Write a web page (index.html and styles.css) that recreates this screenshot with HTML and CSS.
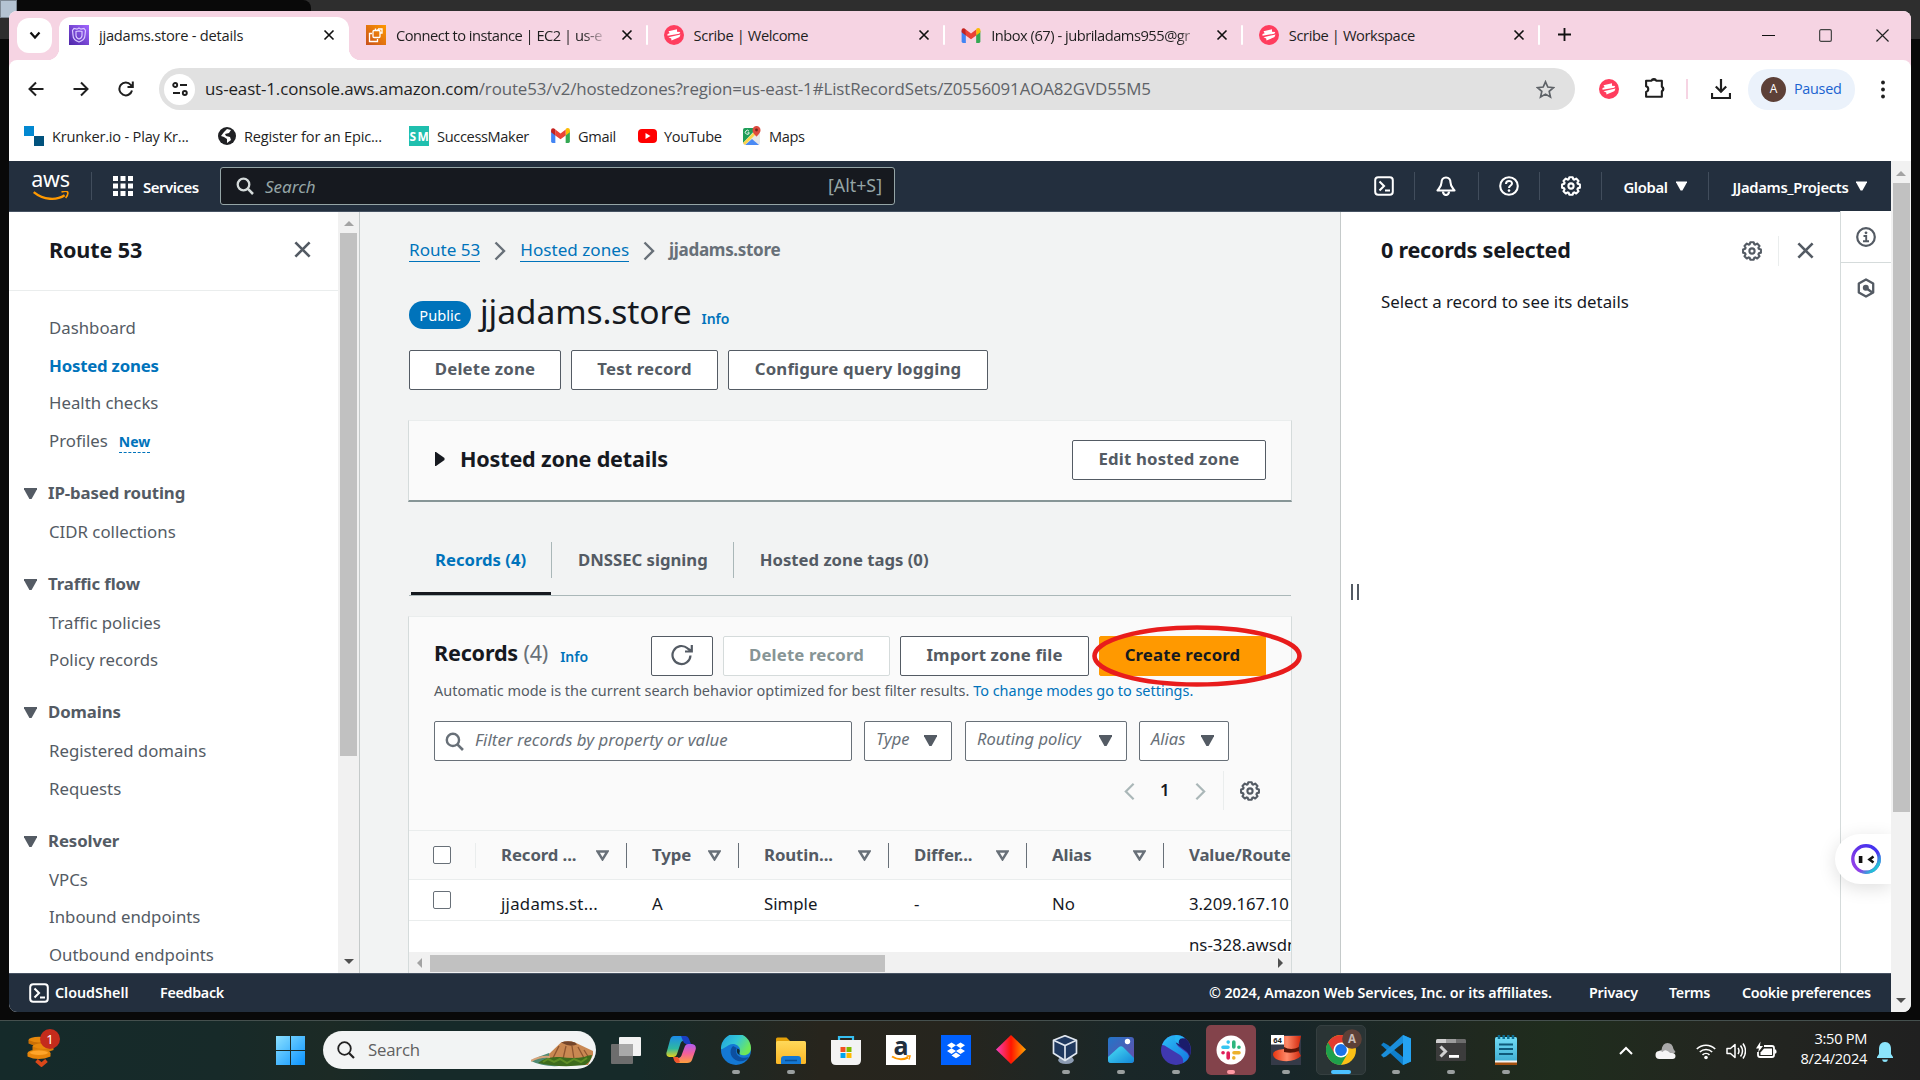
FILE: index.html
```html
<!DOCTYPE html>
<html lang="en">
<head>
<meta charset="utf-8">
<title>jjadams.store - details</title>
<link rel="stylesheet" href="styles.css">
</head>
<body>
<svg class="defs" aria-hidden="true">
  <defs>
    <linearGradient id="purple" x1="0" y1="1" x2="1" y2="0"><stop offset="0" stop-color="#4d27a8"/><stop offset="1" stop-color="#a166ff"/></linearGradient>
    <linearGradient id="orange" x1="0" y1="1" x2="1" y2="0"><stop offset="0" stop-color="#c8511b"/><stop offset="1" stop-color="#f90"/></linearGradient>
    <linearGradient id="ring" x1="1" y1="0" x2="0" y2="1"><stop offset="0" stop-color="#3a35f5"/><stop offset=".4" stop-color="#5b32e8"/><stop offset="1" stop-color="#a044e8"/></linearGradient>
    <linearGradient id="ring2" x1="0" y1="0" x2="1" y2="1"><stop offset=".6" stop-color="#22c3d6" stop-opacity="0"/><stop offset=".85" stop-color="#22c3d6"/></linearGradient>
    <linearGradient id="win" x1="0" y1="0" x2="1" y2="1"><stop offset="0" stop-color="#8be0ff"/><stop offset="1" stop-color="#0a93ff"/></linearGradient>
    <linearGradient id="edgeTop" x1="0" y1="0" x2="1" y2=".5"><stop offset="0" stop-color="#1f9de0"/><stop offset=".55" stop-color="#34c8d6"/><stop offset="1" stop-color="#6fe858"/></linearGradient>
    <linearGradient id="folder" x1="0" y1="0" x2="0" y2="1"><stop offset="0" stop-color="#ffd95a"/><stop offset="1" stop-color="#fbb624"/></linearGradient>
    <linearGradient id="cop1" x1="0" y1="0" x2="0" y2="1"><stop offset="0" stop-color="#1c8bea"/><stop offset=".6" stop-color="#2fb8a0"/><stop offset="1" stop-color="#e8d21a"/></linearGradient>
    <linearGradient id="cop2" x1="0" y1="0" x2="0" y2="1"><stop offset="0" stop-color="#b05cf0"/><stop offset=".5" stop-color="#f4609a"/><stop offset="1" stop-color="#fda03c"/></linearGradient>
    <linearGradient id="diamond"><stop offset="0" stop-color="#f43fc0"/><stop offset=".5" stop-color="#ff1500"/><stop offset="1" stop-color="#ffa800"/></linearGradient>
    <linearGradient id="photo" x1="0" y1="0" x2="1" y2="1"><stop offset="0" stop-color="#2276c9"/><stop offset="1" stop-color="#6a4ba8"/></linearGradient>
    <linearGradient id="hill" x1="0" y1="0" x2="1" y2="1"><stop offset="0" stop-color="#4be0f5"/><stop offset="1" stop-color="#1286d8"/></linearGradient>
    <linearGradient id="note" x1="0" y1="0" x2="0" y2="1"><stop offset="0" stop-color="#72dcf5"/><stop offset="1" stop-color="#39a9cf"/></linearGradient>
    <linearGradient id="hat" x1="0" y1="0" x2="1" y2="0"><stop offset="0" stop-color="#e8350f"/><stop offset=".5" stop-color="#ff8a6a"/><stop offset="1" stop-color="#d2260a"/></linearGradient>
    <linearGradient id="swoosh" x1="0" y1="0" x2="1" y2="1"><stop offset="0" stop-color="#2cc0f5"/><stop offset="1" stop-color="#1478e0"/></linearGradient>
  </defs>
  <symbol id="i-x" viewBox="0 0 16 16"><path d="M2 2l12 12M14 2L2 14" fill="none" stroke="currentColor" stroke-width="2.200"/></symbol>
  <symbol id="i-gear" viewBox="0 0 20 20"><g fill="none" stroke="currentColor" stroke-width="2.100"><path d="M8.3 1.2h3.4l.6 2.1 1 .4 1.900-1.100 2.300 2.300-1.100 1.900.4 1 2.100.6v3.300l-2.100.6-.4 1 1.100 1.900-2.300 2.300-1.900-1.100-1 .4-.6 2h-3.400l-.6-2-1-.4-1.900 1.100-2.300-2.300 1.100-1.900-.4-1-2.100-.6v-3.300l2.100-.6.4-1-1.100-1.900 2.300-2.300 1.900 1.100 1-.4z" stroke-linejoin="round"/><circle cx="10" cy="10" r="2.600"/></g></symbol>
  <symbol id="i-search" viewBox="0 0 18 18"><circle cx="7.500" cy="7.500" r="5.800" fill="none" stroke="currentColor" stroke-width="2.300"/><path d="M11.700 11.700l5.300 5.300" stroke="currentColor" stroke-width="2.500"/></symbol>
  <symbol id="i-shell" viewBox="0 0 20 20"><rect x="1.200" y="1.200" width="17.600" height="17.600" rx="3" fill="none" stroke="currentColor" stroke-width="2"/><path d="M5.500 5.500L10 10l-4.500 4.500M11 14.500h5" fill="none" stroke="currentColor" stroke-width="2.100"/></symbol>
  <symbol id="i-down" viewBox="0 0 12 10"><path d="M0 0h12v1L7 10H5L0 1z" fill="currentColor"/></symbol>
  <symbol id="i-filter" viewBox="0 0 12 10"><path d="M1.500 1.300h9L6 8.600z" fill="none" stroke="currentColor" stroke-width="2.200"/></symbol>
  <symbol id="i-chev" viewBox="0 0 12 20"><path d="M1.500 1.500L10 10l-8.500 8.500" fill="none" stroke="currentColor" stroke-width="2.400"/></symbol>
  <symbol id="i-scribe" viewBox="0 0 20 20"><circle cx="10" cy="10" r="10" fill="#ff3d5e"/><path d="M4.500 6.300L13 4.300v2.400l3.300.2-1 1.800L3.500 10.700V9l2.200-.8z" fill="#fff"/><path d="M4.500 12.200L16.500 9.500l-1 2.500-1.500.7L7.500 15.500l-.3-2z" fill="#fff"/></symbol>
  <symbol id="i-gmail" viewBox="0 0 20 16"><path d="M0 3v11.500Q0 16 1.500 16H4.500V6.500z" fill="#4285f4"/><path d="M20 3v11.500q0 1.500-1.500 1.500H15.500V6.500z" fill="#34a853"/><path d="M15.500 2.500V8L20 4.500V2.500C20 0 17.300-.6 15.500 1z" fill="#fbbc04"/><path d="M4.500 8V1.500L10 5.800l5.500-4.300V8L10 12z" fill="#ea4335"/><path d="M0 2.500V4.500L4.500 8V1.500C2.500-.6 0 0 0 2.500z" fill="#c5221f"/></symbol>
</svg>

<div class="desktop">
  <div class="behind"><i class="blue-chip"></i><i class="dark-tab"></i></div>
  <div class="window">
    <div class="tabstrip">
      <button class="tab-search"><svg width="12" height="9" viewBox="0 0 12 9"><path d="M1.500 1.500L6 6.500l4.500-5" fill="none" stroke="#111" stroke-width="2.200"/></svg></button>
      <div class="tab active">
        <svg class="fav" viewBox="0 0 20 20"><rect width="20" height="20" fill="url(#purple)"/><path d="M10 3l2 1.200 3-.7 1.500 2-.5 4.500c0 4-3 6-6 7-3-1-6-3-6-7L3.500 5.500l1.500-2 3 .7z M10 6l3 .5v4c0 2-1.500 3-3 3.500-1.500-.5-3-1.500-3-3.500v-4z" fill="none" stroke="#d9c7ff" stroke-width="1.200"/></svg>
        <span class="tab-title">jjadams.store - details</span><svg class="tab-x"><use href="#i-x"/></svg>
      </div>
      <div class="tab">
        <svg class="fav" viewBox="0 0 20 20"><rect width="20" height="20" fill="url(#orange)"/><g fill="none" stroke="#fff" stroke-width="1.300"><rect x="7" y="5.500" width="7" height="7" rx="1"/><path d="M9.500 5.500v-2M12 5.500V4M14 8h2V4h-4M6 8.500H3.500v8h8V14"/></g></svg>
        <span class="tab-title fade">Connect to instance | EC2 | us-e</span><svg class="tab-x"><use href="#i-x"/></svg>
      </div>
      <div class="tab"><svg class="fav"><use href="#i-scribe"/></svg><span class="tab-title">Scribe | Welcome</span><svg class="tab-x"><use href="#i-x"/></svg></div>
      <div class="tab"><svg class="fav mail"><use href="#i-gmail"/></svg><span class="tab-title fade">Inbox (67) - jubriladams955@gr</span><svg class="tab-x"><use href="#i-x"/></svg></div>
      <div class="tab"><svg class="fav"><use href="#i-scribe"/></svg><span class="tab-title">Scribe | Workspace</span><svg class="tab-x"><use href="#i-x"/></svg></div>
      <svg class="plus" viewBox="0 0 14 14"><path d="M7 0v14M0 7h14" stroke="#111" stroke-width="2"/></svg>
      <div class="win-ctl">
        <svg viewBox="0 0 14 14"><path d="M0 7h14" stroke="#111" stroke-width="1.300"/></svg>
        <svg viewBox="0 0 14 14"><rect x=".7" y=".7" width="12.600" height="12.600" rx="1.500" fill="none" stroke="#444" stroke-width="1.300"/></svg>
        <svg viewBox="0 0 14 14"><path d="M.5.500l13 13M13.500.500l-13 13" stroke="#222" stroke-width="1.300"/></svg>
      </div>
    </div>

    <div class="toolbar">
      <svg class="nav-ic" viewBox="0 0 16 16"><path d="M15.500 8H1.500M8 1.500L1.500 8 8 14.500" fill="none" stroke="#1f1f1f" stroke-width="2"/></svg>
      <svg class="nav-ic" viewBox="0 0 16 16"><path d="M.5 8h14M8 1.500L14.500 8 8 14.500" fill="none" stroke="#1f1f1f" stroke-width="2"/></svg>
      <svg class="nav-ic" viewBox="0 0 16 16"><path d="M14 9.500A6.400 6.400 0 1 1 12.800 4L15 6M14.800.500V6H9.500" fill="none" stroke="#1f1f1f" stroke-width="2"/></svg>
      <div class="omnibox">
        <span class="site"><svg width="16" height="14" viewBox="0 0 16 14"><g fill="none" stroke="#1f1f1f" stroke-width="1.900"><circle cx="3.200" cy="3" r="2"/><path d="M8 3h7M1 11h7"/><circle cx="12.800" cy="11" r="2"/></g></svg></span>
        <span class="url"><b>us-east-1.console.aws.amazon.com</b>/route53/v2/hostedzones?region=us-east-1#ListRecordSets/Z0556091AOA82GVD55M5</span>
        <svg class="star" viewBox="0 0 18 18"><path d="M9 1.700l2.200 5 5.400.5-4.100 3.600 1.200 5.400L9 13.400l-4.700 2.800 1.200-5.400L1.400 7.200l5.400-.5z" fill="none" stroke="#5f6368" stroke-width="1.600"/></svg>
      </div>
      <svg class="t-scribe"><use href="#i-scribe"/></svg>
      <svg class="t-puzzle" viewBox="0 0 20 20"><path d="M2 3.500h5.200a2.300 2.300 0 0 1 4.400 0H17v5.700a2.300 2.300 0 0 1 0 4.300V18.800H2v-4.600a2.800 2.800 0 0 0 0-5.400z" fill="none" stroke="#1f1f1f" stroke-width="2" stroke-linejoin="round"/><path d="M7.500 3.500a2 2 0 0 1 4 0zM17 9.500a2 2 0 0 1 0 4z" fill="#1f1f1f"/></svg>
      <i class="pink-sep"></i>
      <svg class="t-dl" viewBox="0 0 20 20"><path d="M10 0v12M4.800 7.500L10 12.800l5.200-5.300M1 14v5h18v-5" fill="none" stroke="#1f1f1f" stroke-width="2.200"/></svg>
      <div class="profile"><span class="avatar">A</span><span>Paused</span></div>
      <svg class="dots" viewBox="0 0 4 18"><circle cx="2" cy="2" r="1.900"/><circle cx="2" cy="9" r="1.900"/><circle cx="2" cy="16" r="1.900"/></svg>
    </div>

    <div class="bookmarks">
      <span class="bm bm1"><svg viewBox="0 0 20 20"><path d="M0 0h10v10H0z" fill="#0288d1"/><path d="M10 10h10v10H10z" fill="#01527d"/></svg>Krunker.io - Play Kr...</span>
      <span class="bm bm2"><svg viewBox="0 0 20 20"><circle cx="10" cy="10" r="9" fill="#202124"/><path d="M10 3l4 1-2 3-4 1 1 2 4 1 1 3-4 3v-4l-3-2-3-1 3-4z" fill="#fff"/></svg>Register for an Epic...</span>
      <span class="bm bm3"><svg viewBox="0 0 20 20"><rect width="20" height="20" fill="#1fbfae"/><text x="10" y="14.500" font-size="12" font-weight="700" textLength="19" text-anchor="middle" fill="#fff" font-family="Noto Sans">SM</text></svg>SuccessMaker</span>
      <span class="bm bm4"><svg class="mail"><use href="#i-gmail"/></svg>Gmail</span>
      <span class="bm bm5"><svg viewBox="0 0 20 20"><rect x="0" y="3" width="19" height="14" rx="4" fill="#f00"/><path d="M7.500 7v6l5-3z" fill="#fff"/></svg>YouTube</span>
      <span class="bm bm6"><svg viewBox="0 0 20 20"><rect x="1" y="2" width="17" height="17" rx="2" fill="#e8e8e8"/><path d="M1 4q0-2 2-2h12L1 17z" fill="#1e9e58"/><path d="M3 19l7-6 7 6z" fill="#4a8af4"/><path d="M1 17L12 6l2 2L3 19z" fill="#fbd44b"/><path d="M14.500 0a4 4 0 0 0-4 4.200c0 3 4 6.300 4 6.300s4-3.300 4-6.300A4 4 0 0 0 14.500 0z" fill="#dd4b3e"/><circle cx="14.500" cy="4" r="1.400" fill="#7a231d"/><path d="M7 5.200a2 2 0 1 0 .3 1.600H5.500" fill="none" stroke="#fff" stroke-width=".9"/></svg>Maps</span>
    </div>

    <div class="page">
      <div class="console">
        <header class="aws-bar">
          <div class="aws-logo"><span>aws</span><svg viewBox="0 0 40 11"><path d="M1 1.200c11 9 25 9.500 34 3.500" stroke="#f90" stroke-width="2.600" fill="none"/><path d="M31.500 1.200c3-1 6-1 6.800 0 .6 1.400-.6 4.600-2.200 6.500" stroke="#f90" stroke-width="1.800" fill="none"/></svg></div>
          <i class="bar-sep"></i>
          <svg class="apps" viewBox="0 0 20 20" fill="#fff"><path d="M0 0h5v5H0zM7.500 0h5v5h-5zM15 0h5v5h-5zM0 7.500h5v5H0zM7.500 7.500h5v5h-5zM15 7.500h5v5h-5zM0 15h5v5H0zM7.500 15h5v5h-5zM15 15h5v5h-5z"/></svg>
          <span class="services">Services</span>
          <div class="aws-search"><svg><use href="#i-search"/></svg><em>Search</em><span>[Alt+S]</span></div>
          <div class="aws-right">
            <span class="cell c1"><svg><use href="#i-shell"/></svg></span>
            <span class="cell c2"><svg viewBox="0 0 20 20"><path d="M10 1.500c-3 0-4.500 2-4.500 5C5.500 10.500 3.500 12 1.500 14.500h17c-2-2.500-4-4-4-8 0-3-1.500-5-4.500-5z" fill="none" stroke="currentColor" stroke-width="2.100" stroke-linejoin="round"/><path d="M7 15.500a3 3.500 0 0 0 6 0" fill="none" stroke="currentColor" stroke-width="2.200"/></svg></span>
            <span class="cell c3"><svg viewBox="0 0 20 20"><circle cx="10" cy="10" r="8.800" fill="none" stroke="currentColor" stroke-width="2.100"/><path d="M7 8c0-4 6-4 6-.5C13 9.500 10 9.500 10 12" fill="none" stroke="currentColor" stroke-width="2"/><circle cx="10" cy="14.600" r="1.300" fill="currentColor"/></svg></span>
            <span class="cell c4"><svg><use href="#i-gear"/></svg></span>
            <span class="cell c5"><span>Global</span><svg class="dn"><use href="#i-down"/></svg></span>
            <span class="cell c6"><span>JJadams_Projects</span><svg class="dn"><use href="#i-down"/></svg></span>
          </div>
        </header>

        <div class="work">
          <aside class="side">
            <nav>
              <div class="side-head"><h2>Route 53</h2><svg><use href="#i-x"/></svg></div>
              <ul>
                <li>Dashboard</li>
                <li class="on">Hosted zones</li>
                <li>Health checks</li>
                <li>Profiles <span class="new">New</span></li>
                <li class="grp"><svg><use href="#i-down"/></svg>IP-based routing</li>
                <li>CIDR collections</li>
                <li class="grp"><svg><use href="#i-down"/></svg>Traffic flow</li>
                <li>Traffic policies</li>
                <li>Policy records</li>
                <li class="grp"><svg><use href="#i-down"/></svg>Domains</li>
                <li>Registered domains</li>
                <li>Requests</li>
                <li class="grp"><svg><use href="#i-down"/></svg>Resolver</li>
                <li>VPCs</li>
                <li>Inbound endpoints</li>
                <li>Outbound endpoints</li>
              </ul>
            </nav>
            <div class="vbar side-bar"><i class="up"></i><i class="thumb"></i><i class="down"></i></div>
          </aside>

          <main>
            <div class="crumbs"><a>Route 53</a><svg><use href="#i-chev"/></svg><a>Hosted zones</a><svg><use href="#i-chev"/></svg><strong>jjadams.store</strong></div>
            <div class="heading"><span class="badge">Public</span><h1>jjadams.store</h1><span class="info">Info</span></div>
            <div class="actions"><button class="btn b-dz">Delete zone</button><button class="btn b-tr">Test record</button><button class="btn b-cq">Configure query logging</button></div>
            <section class="details"><svg viewBox="0 0 10 14"><path d="M0 0h1l8.500 6v2L1 14H0z" fill="#16191f"/></svg><h2>Hosted zone details</h2><button class="btn">Edit hosted zone</button></section>
            <div class="tabs"><span class="t on">Records (4)</span><span class="t">DNSSEC signing</span><span class="t">Hosted zone tags (0)</span></div>
            <section class="records">
              <div class="rec-head">
                <h2>Records <span>(4)</span></h2><span class="info">Info</span>
                <button class="btn refresh"><svg viewBox="0 0 22 22"><path d="M19.500 11.500a9 9 0 1 1-3-7.200L20.500 7M20.800 1v6.500H14" fill="none" stroke="#545b64" stroke-width="2.200"/></svg></button>
                <button class="btn disabled">Delete record</button>
                <button class="btn import">Import zone file</button>
                <button class="btn primary">Create record</button>
                <svg class="ring" viewBox="0 0 210 62"><ellipse cx="105" cy="31" rx="102.500" ry="28.500" fill="none" stroke="#e81c1c" stroke-width="4.600"/></svg>
              </div>
              <p class="desc">Automatic mode is the current search behavior optimized for best filter results. <a>To change modes go to settings.</a></p>
              <div class="filters">
                <div class="field"><svg><use href="#i-search"/></svg><em>Filter records by property or value</em></div>
                <div class="sel s1"><em>Type</em><svg><use href="#i-down"/></svg></div>
                <div class="sel s2"><em>Routing policy</em><svg><use href="#i-down"/></svg></div>
                <div class="sel s3"><em>Alias</em><svg><use href="#i-down"/></svg></div>
              </div>
              <div class="pager"><svg class="chev prev"><use href="#i-chev"/></svg><b>1</b><svg class="chev next"><use href="#i-chev"/></svg><i></i><svg class="gear"><use href="#i-gear"/></svg></div>
              <div class="grid head">
                <span class="ck"><i class="box"></i></span>
                <span class="th">Record ...<svg><use href="#i-filter"/></svg></span>
                <span class="th">Type<svg><use href="#i-filter"/></svg></span>
                <span class="th">Routin...<svg><use href="#i-filter"/></svg></span>
                <span class="th">Differ...<svg><use href="#i-filter"/></svg></span>
                <span class="th">Alias<svg><use href="#i-filter"/></svg></span>
                <span class="th last">Value/Route</span>
              </div>
              <div class="grid row"><span class="ck"><i class="box"></i></span><span class="name">jjadams.st...</span><span>A</span><span>Simple</span><span>-</span><span>No</span><span>3.209.167.10</span></div>
              <div class="grid row second"><span></span><span></span><span></span><span></span><span></span><span></span><span>ns-328.awsdn</span></div>
              <div class="hbar"><i class="left"></i><i class="thumb"></i><i class="right"></i></div>
            </section>
          </main>

          <section class="panel">
            <div class="handle"><i></i><i></i></div>
            <div class="panel-body">
              <div class="panel-head"><h2>0 records selected</h2><svg class="gear"><use href="#i-gear"/></svg><i></i><svg class="x"><use href="#i-x"/></svg></div>
              <p>Select a record to see its details</p>
            </div>
          </section>

          <aside class="rail">
            <span><svg viewBox="0 0 20 20"><circle cx="10" cy="10" r="8.800" fill="none" stroke="currentColor" stroke-width="2.200"/><circle cx="10" cy="5.800" r="1.400" fill="currentColor"/><path d="M7.500 9h2.700v5M7 14.300h6" fill="none" stroke="currentColor" stroke-width="1.900"/></svg></span>
            <span><svg viewBox="0 0 20 20"><path d="M10 1.500l7.200 4v9l-7.200 4-7.200-4v-9z" fill="none" stroke="currentColor" stroke-width="2.300" stroke-linejoin="round"/><circle cx="9.800" cy="9.800" r="3" fill="currentColor"/><path d="M10 10l7 5" stroke="currentColor" stroke-width="2.400"/></svg></span>
            <div class="helper"><svg viewBox="0 0 30 30"><circle cx="15" cy="15" r="13.200" fill="none" stroke="url(#ring)" stroke-width="3.400"/><circle cx="15" cy="15" r="13.200" fill="none" stroke="url(#ring2)" stroke-width="3.400"/><path d="M9.600 12v7" stroke="#111" stroke-width="3.600"/><path d="M22.500 12.500l-4 3 4 3" stroke="#111" stroke-width="2.600" fill="none"/></svg></div>
          </aside>
        </div>

        <footer><svg><use href="#i-shell"/></svg><span class="f1">CloudShell</span><span class="f2">Feedback</span><span class="f3">© 2024, Amazon Web Services, Inc. or its affiliates.</span><span class="f4">Privacy</span><span class="f5">Terms</span><span class="f6">Cookie preferences</span></footer>
      </div>
      <div class="vbar page-bar"><i class="up"></i><i class="thumb"></i><i class="down"></i></div>
    </div>
  </div>
</div>

<div class="taskbar">
  <div class="widget"><svg viewBox="0 0 34 38"><g fill="#e8890c"><ellipse cx="12" cy="11" rx="10.500" ry="3.200"/><path d="M1.500 11v3.500q10 5 21 0V11q-10 5-21 0z" fill="#c96f06"/><ellipse cx="16" cy="17.500" rx="10.500" ry="3.200"/><path d="M5.500 17.500V21q10 5 21 0v-3.500q-10 5-21 0z" fill="#d67a08"/><ellipse cx="12" cy="24" rx="11.500" ry="3.600"/><path d="M.5 24v3.500q11 5 23 0V24q-11 5-23 0z" fill="#e8850a"/></g><ellipse cx="12" cy="23.800" rx="9" ry="2.200" fill="#ffa52a"/><path d="M9.500 31.500l5 4.200 5-4.200" fill="none" stroke="#d9481a" stroke-width="4"/></svg><span>1</span></div>
  <svg class="start" viewBox="0 0 29 29"><path d="M0 0h14v14H0zM15 0h14v14H15zM0 15h14v14H0zM15 15h14v14H15z" fill="url(#win)"/></svg>
  <div class="tsearch"><svg class="mag" viewBox="0 0 18 18"><circle cx="7.500" cy="7.500" r="6.300" fill="none" stroke="#222" stroke-width="1.800"/><path d="M12 12l5 5" stroke="#222" stroke-width="2.200"/></svg><span>Search</span>
    <svg class="hillpic" viewBox="0 0 62 26"><path d="M0 20q8-5 18-8l10 13q-16 1-28-5z" fill="#4f8a72"/><path d="M18 13L30 1.500q7-2.500 14 0L62 10v4L57 24H18z" fill="#c98852"/><path d="M30 1.500q7-2.500 14 0l2 2q-7 3-16-2z" fill="#74452a"/><path d="M28 5l-6 12M35 5l-3 13M41 5l2 13M47 6l6 11M53 9l5 8" stroke="#8e5530" stroke-width="1.300"/><path d="M7 22q8-7 22-6 14 2 24 0 5-2 8-2-1 7-7 10-26 3-47-2z" fill="#3d6b1c"/><path d="M12 21l5-3 6 3 6-3 7 4 7-4 7 3 6-4" stroke="#5e8d25" stroke-width="2" fill="none"/><path d="M0 20q9-5 19-4" stroke="#d6a37a" stroke-width="2" fill="none"/></svg></div>
  <div class="apps-row">
    <span class="app"><svg viewBox="0 0 30 30"><rect x="8" y="2" width="22" height="19" rx="1" fill="#f2f2f2"/><rect x="0" y="9" width="22" height="20" rx="1" fill="#6d6d6d"/><path d="M8 9h14v12H8z" fill="#a9a9a9"/></svg></span>
    <span class="app"><svg viewBox="0 0 30 30"><path d="M8 1h9q4 0 5 4l-5 1q-2 0-3 4l-3 9q-1 3-4 3H3q-4-1-2-6L4 5q1-4 4-4z" fill="url(#cop1)"/><path d="M15 1h4q3 0 4 3l2 5h-5q-2 0-3-3z" fill="#1a3fc4"/><path d="M22 9h4q5 1 3.500 6L26 25q-1 3-5 3h-9q-3 0-4-5l4 0q3 0 4-4l3-8q1-2 3-2z" fill="url(#cop2)"/><path d="M7 22h5l2 5-2 1q-3 0-4-3z" fill="#f0562e"/></svg></span>
    <span class="app run"><svg viewBox="0 0 30 30"><circle cx="15" cy="15" r="15" fill="#1478d4"/><path d="M0 14A15 15 0 0 1 30 13c0 6-5 8-9 7-3-.5-3-2-2-4 1-5-6-9-11-6-4 2-7 5-8 4z" fill="url(#edgeTop)"/><path d="M12 11c-5 5-2 13 5 15 5 1 9-1 11-4-6 2-12 0-13-5-.5-3 1-4 1-4z" fill="#0c4fa0"/><path d="M19 20c-3-1-4-4-2.500-6.500 2.500 1 2.500 2.500 2 4q-.5 1.500 .5 2.500z" fill="#0f2b33"/></svg></span>
    <span class="app run"><svg viewBox="0 0 30 30"><path d="M0 4q0-1.500 1.500-1.500h9L14 6v5H0z" fill="#e3a008"/><rect x="0" y="6" width="30" height="23" rx="1.500" fill="url(#folder)"/><path d="M5 29v-5q0-3 3-3h14q3 0 3 3v5z" fill="#1478d4"/><path d="M9 25.500h12" stroke="#0a4e93" stroke-width="1.500"/></svg></span>
    <span class="app"><svg viewBox="0 0 30 30"><path d="M8 8V2h14v6" fill="none" stroke="#36bff0" stroke-width="2.200"/><path d="M0 5h30v20q0 5-5 5H5q-5 0-5-5z" fill="#f3f3f3"/><path d="M9.500 12h5v5h-5z" fill="#f25022"/><path d="M15.500 12h5v5h-5z" fill="#7fba00"/><path d="M9.500 18h5v5h-5z" fill="#00a4ef"/><path d="M15.500 18h5v5h-5z" fill="#ffb900"/></svg></span>
    <span class="app"><svg viewBox="0 0 30 30"><path d="M0 0h30v30H0z" fill="#fff"/><text x="15" y="19.500" text-anchor="middle" font-family="Open Sans" font-weight="700" font-size="25" fill="#222f3e">a</text><path d="M6 21.500q8 5 16 1" stroke="#f90" stroke-width="2" fill="none"/><path d="M20.500 21l3.500 0-1 3.500" stroke="#f90" stroke-width="1.500" fill="none"/></svg></span>
    <span class="app"><svg viewBox="0 0 30 30"><path d="M0 0h30v30H0z" fill="#0061ff"/><path d="M10.500 7.500L15 10.300l-4.500 2.900L6 10.300zM19.500 7.500l4.500 2.800-4.500 2.900-4.500-2.900zM10.500 13.200L15 16l-4.500 2.900L6 16zM19.500 13.200L24 16l-4.500 2.900L15 16zM15 17.500l4.500 2.900L15 23.300l-4.500-2.900z" fill="#fff"/></svg></span>
    <span class="app"><svg viewBox="0 0 30 30"><path d="M15 0l15 14.500L15 29 0 14.500z" fill="url(#diamond)"/></svg></span>
    <span class="app run"><svg viewBox="0 0 30 30"><path d="M9 22h12l2 3q-1 4-8 4t-8-4z" fill="#8c9bb2"/><path d="M14 .7l11.500 4.500v13L14 25.500 2.500 18.200v-13z" fill="#20395f" stroke="#dfe6ef" stroke-width="1.700" stroke-linejoin="round"/><path d="M2.500 5.200L14 10.500l11.500-5.300M14 10.500v15" stroke="#dfe6ef" stroke-width="1.700" fill="none"/></svg></span>
    <span class="app run"><svg viewBox="0 0 30 30"><rect x="2" y="2" width="26" height="26" rx="3" fill="url(#photo)"/><path d="M2 22L13 12q2-1.500 4 0l11 11v2q0 3-3 3H5q-3 0-3-3z" fill="url(#hill)"/><circle cx="21.500" cy="6.500" r="2.700" fill="#fff"/></svg></span>
    <span class="app run"><svg viewBox="0 0 30 30"><circle cx="15" cy="15" r="15" fill="#4038b0"/><path d="M1 10Q5 0 15 0q5 0 8 3-7-2-8 3-.5 3 3 6l8 6q4 4-1 8l-3 2q1-5-3-8L6 12Q3 9.500 1 10z" fill="url(#swoosh)"/><path d="M15 0q8 0 13 7.500Q31 15 28.500 21.500 28 18 25 16l-8-6q-4-3-1-7 3-2 7 0z" fill="#1a1c6b"/><path d="M15 0q6 0 9 3.500-5-1-6 2-1 2 1 4l-4-2q-3-3 0-7.500z" fill="#25b4f3"/></svg></span>
    <span class="app run slack"><svg viewBox="0 0 30 30"><circle cx="15" cy="15" r="14.500" fill="#fff"/><g stroke-width="3.600" stroke-linecap="round"><path d="M7 12.200h5M12.200 7v.1" stroke="#36c5f0"/><path d="M17.800 7v5M23 12.200h-.1" stroke="#2eb67d"/><path d="M18 17.800h5M17.800 23v-.1" stroke="#ecb22e"/><path d="M12.200 18v5M7 17.800h.1" stroke="#e01e5a"/></g></svg></span>
    <span class="app run"><svg viewBox="0 0 30 30"><path d="M0 0h30v30H0z" fill="#353a48"/><path d="M13 1h17l-3 14 3 6q-6 6-18 5-9-1-10-6-1-5 11-6z" fill="url(#hat)"/><path d="M13 12q7 4 15 0v4q-7 3-15 1z" fill="#5b1508"/><path d="M0 0h13v9.500H0z" fill="#fff"/><text x="6.500" y="7.800" text-anchor="middle" font-family="Noto Sans" font-weight="700" font-size="7.500" fill="#222">64</text></svg></span>
    <span class="app run current"><svg viewBox="0 0 36 36"><g transform="translate(0 6)"><circle cx="15" cy="15" r="15" fill="#fbc116"/><path d="M15 15L2 7.500A15 15 0 0 0 15 30l6.500-11.300z" fill="#1fa04b"/><path d="M15 7.500h13a15 15 0 0 0-26 0l6.500 11z" fill="#e33b2e"/><circle cx="15" cy="15" r="7.500" fill="#fff"/><circle cx="15" cy="15" r="5.900" fill="#1a73e8"/></g><circle cx="26" cy="10" r="9.800" fill="#5d4037"/><text x="26" y="14.200" text-anchor="middle" font-family="Noto Sans" font-weight="700" font-size="11.500" fill="#c9bdb8">A</text></svg></span>
    <span class="app run"><svg viewBox="0 0 30 30"><path d="M22 0l8 3.500v23L22 30 2 11.500 0 10l2.500-2.500L7 10l15 12z" fill="#0f7fcb"/><path d="M22 8L5 21.500 2.500 22.500 0 20 22 0z" fill="#1b8fdb"/><path d="M22 0l8 3.500v23L22 30z" fill="#25a3f2"/></svg></span>
    <span class="app run"><svg viewBox="0 0 30 30"><rect y="4" width="30" height="22" rx="1.500" fill="#3c3c3c"/><path d="M0 8V5.500Q0 4 1.500 4H10v4z" fill="#cfcfcf"/><path d="M10 4h10v4H10z" fill="#9c9c9c"/><path d="M20 4h8.500Q30 4 30 5.500V8H20z" fill="#6d6d6d"/><path d="M4.500 11.500l5 5-5 5" stroke="#d0d0d0" stroke-width="3" fill="none"/><path d="M13 20h10v2.800H13z" fill="#fff"/></svg></span>
    <span class="app run"><svg viewBox="0 0 30 30"><rect x="4" y="2" width="22" height="28" rx="1.500" fill="url(#note)"/><path d="M4 25.500h22V28H4z" fill="#f2f2f2"/><path d="M4 27.500h22V30H4z" fill="#a4500f"/><path d="M8 9.500h14M8 14h14M8 19h14" stroke="#0f5a7a" stroke-width="2"/><path d="M8 0v4M12.700 0v4M17.300 0v4M22 0v4" stroke="#0d6d92" stroke-width="2.500"/></svg></span>
  </div>
  <div class="tray">
    <svg class="tr-up" viewBox="0 0 14 9"><path d="M1 8l6-6 6 6" fill="none" stroke="#fff" stroke-width="2"/></svg>
    <svg class="tr-cloud" viewBox="0 0 20 16"><path d="M3 10q0-3 3-3Q7 0 12 0q5 0 6 6l2 3-5 4H4z" fill="#a8a8a8"/><path d="M4 16a4 4 0 0 1 0-8q2 0 3 1 2-3 5-1 2 1 2.500 2Q20 9.500 20 13q0 3-3 3z" fill="#f5f5f5"/></svg>
    <svg class="tr-wifi" viewBox="0 0 20 18"><g fill="none" stroke="#fff" stroke-width="1.600"><path d="M.8 7a13 13 0 0 1 18.400 0M3.800 10a9 9 0 0 1 12.400 0M6.500 12.900a5 5 0 0 1 7 0"/></g><circle cx="10" cy="15.500" r="1.800" fill="#fff"/></svg>
    <svg class="tr-snd" viewBox="0 0 20 18"><g fill="none" stroke="#fff" stroke-width="1.500"><path d="M1 6.500h3.500L9 2.500v13L4.500 11.500H1z" stroke-linejoin="round"/><path d="M12 6q2 3 0 6M14.500 3.500q4 5.500 0 11M17 1.500q5 7.500 0 15"/></g></svg>
    <svg class="tr-bat" viewBox="0 0 21 18"><path d="M8 4.500h8q2 0 2 2v7q0 2-2 2H4q-2 0-2-2v-3" fill="none" stroke="#fff" stroke-width="1.800"/><path d="M8 7h8v6.500H4.500V11z" fill="#fff"/><path d="M18.500 8H20q1 2 0 4h-1.500z" fill="#fff"/><path d="M4.500 0L0 7h3L2 11l5-6.500H4z" fill="#fff"/></svg>
    <div class="clock"><span>3:50 PM</span><span>8/24/2024</span></div>
    <svg class="tr-bell" viewBox="0 0 16 20"><path d="M8 0C4 0 2 3 2 7v5L0 15v1h16v-1l-2-3V7c0-4-2-7-6-7z" fill="#8be4fb"/><path d="M5 17.500h6q-.5 2.500-3 2.500t-3-2.500z" fill="#8be4fb"/></svg>
  </div>
</div>
</body>
</html>
```
FILE: styles.css
```css
* { box-sizing: border-box; }
html, body { margin: 0; padding: 0; }
body { width: 1920px; height: 1080px; overflow: hidden; background: #090909; color: #16191f; display: flex; flex-direction: column; font-family: "Noto Sans", "Open Sans", sans-serif; font-size: 16.8px; line-height: 1; }
h1, h2, p, ul { margin: 0; padding: 0; font-size: inherit; }
button { font: inherit; margin: 0; padding: 0; border: 0; }
svg { display: block; flex: none; }
i { display: block; flex: none; }
.defs { position: absolute; width: 0; height: 0; }

/* desktop and window frame */
.desktop { position: relative; height: 1020px; padding: 11px 9px 8px; flex: none; }
.behind { position: absolute; inset: 0 0 auto 0; height: 39px; background: #2e2e2e; display: flex; }
.blue-chip { width: 17px; height: 18px; background: #b4c3d2; border: 1px solid #7d8893; }
.dark-tab { width: 294px; background: #090909; border-top-right-radius: 8px; }
.window { position: relative; width: 1902px; height: 1001px; border-radius: 8px; overflow: hidden; display: flex; flex-direction: column; background: #fff; }
.tabstrip, .toolbar, .bookmarks, .profile, .clock, .tsearch { font-family: "Open Sans", "Noto Sans", sans-serif; color: #1f1f1f; }

/* tabs */
.tabstrip { height: 57px; margin-bottom: -8px; background: #f6d4e3; display: flex; flex: none; padding: 6px 0 8px 8px; font-size: 14.7px; letter-spacing: -.4px; }
.tab-search { width: 35px; height: 35px; margin: 1px 7px 0 0; border-radius: 12px; background: #fff; display: grid; place-items: center; }
.tab { width: 297.600px; height: 36px; display: flex; align-items: center; padding: 0 14px 0 15px; border-right: 2px solid #f6d4e3; position: relative; flex: none; }
.tab:not(.active)::after { content: ""; position: absolute; right: -1px; top: 8px; height: 20px; width: 2px; background: #fff; border-radius: 1px; }
.tab.active { width: 290px; height: 43px; margin-right: 2px; padding: 0 14px 7px 10px; background: #fff; border: 0; border-radius: 12px 12px 0 0; letter-spacing: -.25px; }
.tab.active::before, .tab.active::after { content: ""; position: absolute; bottom: 0; width: 12px; height: 12px; }
.tab.active::before { left: -12px; background: radial-gradient(circle at 0 0, transparent 12px, #fff 12.500px); }
.tab.active::after { right: -12px; background: radial-gradient(circle at 100% 0, transparent 12px, #fff 12.500px); }
.fav { width: 20px; height: 20px; margin-right: 10px; }
.fav.mail { height: 15px; }
.tab-title { flex: 1; white-space: nowrap; overflow: hidden; line-height: 22px; margin-right: 12px; }
.tab-title.fade { margin-right: 13px; letter-spacing: -.5px; -webkit-mask-image: linear-gradient(90deg, #000 88%, transparent); mask-image: linear-gradient(90deg, #000 88%, transparent); }
.tab-x { width: 12px; height: 12px; color: #111; }
.plus { width: 13px; height: 13px; margin: 11px 0 0 17px; }
.win-ctl { display: flex; gap: 44px; margin: 12px 0 0 auto; padding-right: 22px; }
.win-ctl svg { width: 13px; height: 13px; }

/* toolbar */
.toolbar { position: relative; height: 58px; background: #fff; border-radius: 8px 8px 0 0; display: flex; align-items: center; padding-left: 19px; flex: none; }
.nav-ic { width: 16px; height: 16px; margin-right: 29px; }
.omnibox { width: 1416px; height: 42px; border-radius: 21px; background: #e1e1e1; display: flex; align-items: center; padding: 0 20px 0 5px; margin-left: -4px; margin-right: 1px; }
.site { width: 31px; height: 31px; border-radius: 50%; background: #fff; display: grid; place-items: center; }
.url { flex: 1; margin-left: 10px; font-size: 16.900px; letter-spacing: -.115px; color: #5f6368; white-space: nowrap; line-height: 24px; }
.url b { font-weight: 400; color: #1f1f1f; }
.star { width: 19px; height: 19px; }
.t-scribe { width: 20px; height: 20px; margin-left: 23px; }
.t-puzzle { width: 21px; height: 21px; margin-left: 25px; margin-top: -4px; }
.pink-sep { width: 2px; height: 20px; background: #f6d4e3; margin-left: 21px; }
.t-dl { width: 20px; height: 20px; margin-left: 23px; }
.profile { width: 107px; height: 41px; margin-left: 17px; border-radius: 20px; background: #ebf2fb; color: #1a63d0; display: flex; align-items: center; gap: 8px; padding-left: 13px; font-size: 14.400px; letter-spacing: -.3px; }
.avatar { width: 25px; height: 25px; border-radius: 50%; background: #5d4037; color: #fff; display: grid; place-items: center; font-size: 12px; }
.dots { width: 4px; height: 21px; margin-left: 26px; fill: #1f1f1f; }

/* bookmarks */
.bookmarks { height: 43px; padding: 0 0 8px 15px; display: flex; align-items: center; font-size: 14.600px; letter-spacing: -.35px; flex: none; line-height: 22px; }
.bm { display: flex; align-items: center; gap: 8px; white-space: nowrap; flex: none; }
.bm svg { width: 20px; height: 20px; }
.bm svg.mail { height: 15px; width: 19px; }
.bm1 { width: 193px; letter-spacing: -.2px; } .bm2 { width: 192px; gap: 7px; letter-spacing: -.2px; } .bm3 { width: 142px; } .bm4 { width: 87px; } .bm5 { width: 104px; gap: 6px; } .bm6 { gap: 7px; }

/* console shell */
.page { display: flex; height: 851px; flex: none; }
.console { width: 1882px; flex: none; display: flex; flex-direction: column; }
.aws-bar { height: 51px; margin-bottom: -1px; background: #232f3e; border-bottom: 1px solid #465262; color: #fff; display: flex; align-items: center; padding-left: 21px; flex: none; font-size: 14.800px; position: relative; }
.aws-logo { width: 41px; height: 31px; margin-top: -4px; display: flex; flex-direction: column; align-items: center; }
.aws-logo span { font-size: 21.500px; line-height: 20px; letter-spacing: -.2px; }
.aws-logo svg { width: 40px; height: 10px; margin-top: 2px; }
.bar-sep { width: 1px; height: 28px; background: #414d5c; margin: 0 20px; }
.apps { width: 20px; height: 20px; margin-left: 1px; }
.services { width: 87px; padding: 2px 0 0 10px; font-weight: 600; letter-spacing: -.5px; font-size: 15px; }
.aws-search { width: 675px; height: 38px; background: #16191f; border: 1px solid #95a5a6; border-radius: 3px; display: flex; align-items: center; padding: 0 12px 0 15px; color: #95a5a6; font-size: 17px; }
.aws-search svg { width: 18px; height: 18px; color: #d5dbdb; margin-right: 11px; }
.aws-search em { flex: 1; }
.aws-search span { font-size: 17.800px; }
.aws-right { margin-left: auto; display: flex; align-items: center; }
.cell { height: 28px; border-right: 1px solid #414d5c; display: flex; align-items: center; justify-content: center; font-weight: 600; letter-spacing: -.35px; }
.cell span { padding-top: 2px; }
.cell svg { width: 20px; height: 20px; }
.cell svg.dn { width: 11px; height: 10px; margin-left: 8px; }
.c1 { width: 62px; } .c2 { width: 64px; } .c3 { width: 61px; } .c4 { width: 62px; } .c5 { width: 107px; } .c6 { width: 182px; border: 0; }
.c2 svg { margin-left: -1px; }
.work { height: 762px; display: flex; flex: none; }

/* classic scrollbars */
.vbar { background: #f1f1f1; display: flex; flex-direction: column; align-items: center; }
.vbar .thumb, .hbar .thumb { background: #c1c1c1; }
.up, .down { width: 0; height: 0; border: 5px solid transparent; border-top-width: 0; border-bottom: 5px solid #a3a3a3; margin: 10px 0 7px; }
.down { border-top: 5px solid #505050; border-bottom-width: 0; margin: auto 0 9px; }

/* side navigation */
.side { width: 351px; background: #fff; border-right: 1px solid #c5caca; display: flex; flex: none; color: #545b64; }
.side nav { width: 329px; overflow: hidden; }
.side-head { height: 80px; border-bottom: 1px solid #eaeded; display: flex; align-items: center; padding: 0 26px 2px 40px; justify-content: space-between; }
.side-head h2 { color: #16191f; font-size: 21.600px; letter-spacing: -.15px; }
.side-head svg { width: 19px; height: 19px; }
.side ul { list-style: none; padding-top: 19px; }
.side li { height: 37.500px; padding-left: 40px; display: flex; align-items: center; white-space: nowrap; }
.side li.on { color: #0073bb; font-weight: 700; letter-spacing: -.2px; }
.side li.grp { font-weight: 700; padding-left: 15px; margin: 14.500px 0 1.500px; letter-spacing: -.1px; }
.grp svg { width: 13px; height: 11px; margin-right: 11px; }
.new { color: #0073bb; font-size: 14px; font-weight: 700; line-height: 20px; border-bottom: 1px dashed #0073bb; margin: 3px 0 0 11px; }
.side-bar { width: 21px; }
.side-bar .thumb { width: 17px; height: 523px; }

/* main column */
main { width: 980px; padding-left: 49px; background: #f2f3f3; flex: none; overflow: hidden; }
.crumbs { height: 78px; display: flex; align-items: center; white-space: nowrap; font-size: 17.100px; }
.crumbs a { color: #0073bb; border-bottom: 1px solid #0073bb; line-height: 22px; }
.crumbs svg { width: 12px; height: 20px; color: #687078; margin: 2px 14px 0 14px; }
.crumbs strong { color: #687078; letter-spacing: -.35px; }
.heading { height: 61px; display: flex; align-items: center; }
.badge { width: 62px; height: 28px; border-radius: 14px; background: #0073bb; color: #fff; font-size: 14.600px; display: grid; place-items: center; margin: -9px 9px 0 0; }
h1 { font-weight: 400; font-size: 33.600px; margin: -15px 10px 0 0; letter-spacing: -.1px; }
.info { color: #0073bb; font-weight: 600; font-size: 14px; }
.heading .info { margin-top: -1px; }
.actions { display: flex; gap: 10px; }
.btn { height: 40px; background: #fff; border: 1px solid #545b64; border-radius: 2px; color: #545b64; font-weight: 700; font-size: 16.800px; letter-spacing: .15px; display: grid; place-items: center; padding-bottom: 2px; white-space: nowrap; flex: none; }
.b-dz { width: 152px; } .b-tr { width: 147px; } .b-cq { width: 260px; }
.details, .records { width: 884px; margin-left: -1px; background: #fafafa; border: 1px solid #d5dbdb; border-top-color: #eaeded; }
.details { height: 82px; margin-top: 30px; border-bottom: 2px solid #879596; display: flex; align-items: center; padding: 0 25px 1px 26px; }
.details svg { width: 10px; height: 14px; margin: -2px 15px 0 0; }
.details h2 { flex: 1; font-size: 21.600px; letter-spacing: -.2px; margin-top: -3px; }
.details .btn { width: 194px; }
.tabs { width: 882px; height: 94px; border-bottom: 1px solid #aab7b8; display: flex; padding: 0 0 0 2px; font-weight: 700; color: #545b64; font-size: 16.700px; }
.t { height: 36px; margin-top: 40px; padding: 0 25px 0 26px; border-left: 1px solid #aab7b8; display: flex; align-items: center; white-space: nowrap; }
.t.on { width: 140px; padding: 0 0 14px 24px; margin-bottom: 0; height: 53px; border-left: 0; border-bottom: 3px solid #16191f; color: #0073bb; }

/* records table */
.records { margin-top: 20px; height: 358px; overflow: visible; border-bottom: 0; }
.rec-head { position: relative; height: 59px; padding: 19px 0 0 25px; display: flex; gap: 10px; }
.rec-head h2 { font-size: 21.600px; letter-spacing: -.2px; margin-top: 6px; white-space: nowrap; }
.rec-head h2 span { font-weight: 400; color: #687078; }
.rec-head .info { margin: 14px 0 0 2px; flex: 1; }
.refresh { width: 62px; }
.refresh svg { width: 22px; height: 22px; }
.disabled { width: 167px; color: #879596; border-color: #d5dbdb; }
.import { width: 189px; }
.primary { width: 167px; background: #f90; border-color: #f90; color: #16191f; margin-right: 25px; }
.ring { position: absolute; left: 683px; top: 8px; width: 210px; height: 62px; z-index: 2; }
.desc { padding: 8px 0 0 25px; font-size: 14.460px; height: 23px; color: #545b64; white-space: nowrap; }
.desc a { color: #0073bb; }
.filters { display: flex; padding: 22px 0 0 25px; color: #687078; }
.field, .sel { height: 40px; border: 1px solid #687078; border-radius: 2px; background: #fff; display: flex; align-items: center; padding-bottom: 2px; white-space: nowrap; }
.field { width: 418px; padding-left: 10px; margin-right: 12px; }
.field svg { width: 19px; height: 19px; margin: 2px 11px 0 0; }
.field em { letter-spacing: .05px; padding-top: 1px; }
.sel { padding: 0 14px 3px 11px; justify-content: space-between; font-size: 16.500px; }
.sel svg { width: 13px; height: 11px; color: #545b64; margin-top: 2px; }
.s1 { width: 88px; margin-right: 13px; } .s2 { width: 162px; margin-right: 12px; } .s3 { width: 90px; }
.pager { height: 69px; display: flex; padding: 10px 31px 0 0; justify-content: flex-end; }
.pager b { width: 8px; margin: 11px 27px 0 25px; font-weight: 600; }
.chev { width: 11px; height: 19px; margin-top: 11px; color: #aab7b8; }
.prev { transform: scaleX(-1); }
.pager i { width: 1px; height: 39px; background: #eaeded; margin: 0 16px 0 17px; }
.pager .gear { width: 20px; height: 20px; margin-top: 10px; color: #545b64; }
.grid { width: 882px; overflow: hidden; display: grid; grid-template-columns: 67px 151px 112px 150px 138px 137px 127px; }
.head { height: 50px; border-top: 1px solid #eaeded; border-bottom: 1px solid #eaeded; align-items: center; color: #545b64; font-weight: 700; }
.ck { height: 25px; border-right: 1px solid #eaeded; padding: 3px 0 0 24px; }
.box { width: 18px; height: 18px; border: 1px solid #687078; border-radius: 2px; background: #fff; }
.th { height: 25px; border-right: 1px solid #687078; padding: 0 17px 0 25px; display: flex; align-items: center; justify-content: space-between; white-space: nowrap; letter-spacing: -.1px; }
.th svg { width: 13px; height: 11px; color: #687078; }
.th.last { border: 0; padding-right: 0; letter-spacing: -.15px; }
.row { height: 41px; background: #fff; border-bottom: 1px solid #eaeded; padding-top: 16px; white-space: nowrap; }
.row span { padding-left: 25px; }
.row .name { letter-spacing: .25px; }
.row .ck { border: 0; padding: 0 0 0 24px; margin-top: -5px; }
.second { height: 31px; border: 0; padding-top: 16px; }
.hbar { height: 22px; background: #f1f1f1; display: flex; align-items: center; }
.hbar .thumb { width: 455px; height: 17px; }
.left, .right { width: 0; height: 0; border: 5px solid transparent; border-left-width: 0; border-right: 5px solid #a3a3a3; margin: 0 8px; }
.right { border-right-width: 0; border-left: 5px solid #505050; margin: 0 8px 0 auto; }

/* split panel and tool rail */
.panel { width: 500px; background: #fff; border-left: 1px solid #c5caca; display: flex; flex: none; }
.handle { width: 40px; display: flex; gap: 4px; padding: 373px 0 0 10px; }
.handle i { width: 2px; height: 16px; background: #545b64; }
.panel-body { flex: 1; }
.panel-head { height: 78px; display: flex; align-items: center; color: #545b64; padding-top: 1px; }
.panel-head h2 { flex: 1; color: #16191f; font-size: 21.600px; letter-spacing: -.25px; margin-top: -2px; }
.panel-head .gear { width: 20px; height: 20px; }
.panel-head i { width: 1px; height: 30px; background: #eaeded; margin: 0 17px 0 16px; }
.panel-head .x { width: 19px; height: 19px; margin-right: 25px; }
.panel-body p { padding-top: 5px; font-size: 16.850px; }
.rail { position: relative; width: 51px; background: #fff; border-left: 1px solid #d5dbdb; color: #545b64; }
.rail span { height: 52px; border-bottom: 1px solid #d5dbdb; display: grid; place-items: center; }
.rail span + span { border: 0; height: 50px; }
.rail svg { width: 20px; height: 20px; }
.helper { position: absolute; right: 0; top: 623px; width: 56px; height: 50px; border-radius: 25px 0 0 25px; background: #fff; box-shadow: 0 4px 18px rgba(0, 0, 0, .13); clip-path: inset(-40px 0 -40px -40px); display: flex; align-items: center; padding-left: 16px; }
.rail .helper svg { width: 30px; height: 30px; }
.page-bar { width: 20px; }
.page-bar .thumb { width: 17px; height: 629px; }

/* footer */
footer { height: 39px; background: #232f3e; border-top: 1px solid #465262; color: #fff; display: flex; align-items: center; padding: 0 0 0 20px; font-weight: 600; font-size: 14.300px; letter-spacing: -.3px; white-space: nowrap; }
footer svg { width: 20px; height: 20px; margin-top: -1px; }
.f1 { width: 105px; margin-left: 6px; letter-spacing: 0; } .f2 { width: 66px; } .f3 { margin-left: auto; width: 380px; letter-spacing: -.11px; } .f4 { width: 80px; letter-spacing: -.2px; } .f5 { width: 73px; } .f6 { width: 149px; }

/* taskbar */
.taskbar { height: 60px; flex: none; border-top: 1px solid #45504e; background: linear-gradient(90deg, #152a2a 0, #172a29 220px, #1c2a25 330px, #162a29 420px, #162a29 640px, #27251d 820px, #26251e 960px, #1a2728 1120px, #182629 1290px, #20291f 1480px, #1f2d1d 1560px, #232620 1720px, #202020 1920px); display: flex; }
.widget { width: 276px; padding: 3px 0 0 27px; position: relative; flex: none; }
.widget svg { width: 34px; height: 38px; margin-top: 5px; }
.widget span { position: absolute; left: 40px; top: 8px; width: 20px; height: 20px; border-radius: 50%; background: #c42b1c; color: #fff; font-size: 13px; display: grid; place-items: center; }
.start { width: 29px; height: 29px; margin: 15px 18px 0 0; }
.tsearch { width: 273px; height: 38px; margin: 10px 5px 0 0; border-radius: 19px; background: #f2f4f4; display: flex; align-items: center; padding-left: 14px; color: #5f6060; font-size: 16.800px; flex: none; overflow: hidden; }
.mag { width: 18px; height: 18px; }
.tsearch span { flex: 1; padding: 1px 0 0 13px; letter-spacing: -.2px; }
.hillpic { width: 62px; height: 26px; margin: 8px 3px 0 0; }
.apps-row { display: flex; gap: 5px; padding-top: 4px; }
.app { width: 50px; height: 50px; position: relative; display: grid; place-items: center; border-radius: 5px; flex: none; }
.app svg { width: 30px; height: 30px; margin-top: -1px; }
.app.run::after { content: ""; position: absolute; left: 21px; bottom: 1px; width: 8px; height: 4px; border-radius: 2px; background: #9a9f9f; }
.app.slack { background: #83434b; }
.app.slack::after { background: #ff99a4; }
.app.current { background: #2a3435; border: 1px solid #353f40; }
.app.current svg { width: 36px; height: 36px; margin: -7px 0 0 6px; }
.app.current::after { left: 14px; bottom: 0; width: 20px; background: #4cc2ff; }
.tray { display: flex; align-items: center; margin-left: auto; flex: none; }
.tr-up { width: 14px; height: 9px; margin-right: 22px; }
.tr-cloud { width: 21px; height: 16px; margin-right: 20px; }
.tr-wifi { width: 20px; height: 18px; margin-right: 10px; }
.tr-snd { width: 20px; height: 18px; margin-right: 10px; }
.tr-bat { width: 21px; height: 19px; margin-right: 14px; }
.clock { width: 76px; color: #fff; text-align: right; font-size: 14.600px; letter-spacing: -.3px; display: flex; flex-direction: column; gap: 1px; line-height: 19px; margin: -4px 10px 0 0; }
.tr-bell { width: 16px; height: 20px; margin-right: 27px; margin-top: 2px; }
```
